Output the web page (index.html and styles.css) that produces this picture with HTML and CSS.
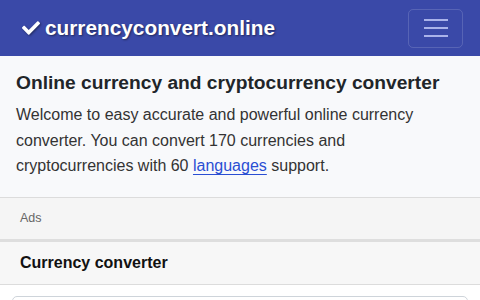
FILE: index.html
```html
<!DOCTYPE html>
<html lang="en">
<head>
<meta charset="utf-8">
<link rel="stylesheet" href="styles.css">
</head>
<body>
<nav class="navbar">
  <a class="brand" href="#">
    <svg class="check" viewBox="0 0 512 512" width="18" height="18"><path fill="#fff" d="M173.9 439.4L7.5 273c-10-10-10-26.2 0-36.2l36.2-36.2c10-10 26.2-10 36.2 0L192 312.7 432.1 72.6c10-10 26.2-10 36.2 0l36.2 36.2c10 10 10 26.2 0 36.2L210.1 439.4c-10 10-26.2 10-36.2 0z"/></svg>
    <span>currencyconvert.online</span>
  </a>
  <button class="toggler" type="button" aria-label="menu">
    <span class="bar"></span><span class="bar"></span><span class="bar"></span>
  </button>
</nav>
<section class="intro">
  <h1>Online currency and cryptocurrency converter</h1>
  <p>Welcome to easy accurate and powerful online currency converter. You can convert 170 currencies and cryptocurrencies with 60 <a href="#">languages</a> support.</p>
</section>
<div class="ads">Ads</div>
<div class="card">
  <div class="card-header">Currency converter</div>
  <div class="card-body">
    <div class="input"></div>
  </div>
</div>
</body>
</html>
```
FILE: styles.css
```css
* { box-sizing: border-box; }
html, body { margin: 0; padding: 0; }
body {
  font-family: "Liberation Sans", Arial, sans-serif;
  color: #212529;
  background: #fff;
  width: 480px;
  height: 300px;
  overflow: hidden;
}
.navbar {
  height: 56px;
  background: #3a49a8;
  display: flex;
  align-items: center;
  justify-content: space-between;
  padding: 0 17px 0 22px;
}
.brand {
  display: flex;
  align-items: center;
  gap: 5px;
  color: #fff;
  text-decoration: none;
  font-weight: bold;
  font-size: 20.8px;
  text-shadow: 1px 1px 2px rgba(0,0,0,0.45);
}
.check { filter: drop-shadow(1px 1px 1px rgba(0,0,0,0.45)); }
.toggler {
  width: 55px;
  height: 39px;
  border: 1px solid rgba(255,255,255,0.15);
  border-radius: 5px;
  background: transparent;
  display: flex;
  flex-direction: column;
  align-items: center;
  justify-content: center;
  gap: 6px;
  padding: 0;
}
.bar {
  display: block;
  width: 24px;
  height: 2px;
  background: #aab3ea;
}
.intro {
  background: #f8f9fb;
  padding: 14px 16px 14px;
  border-bottom: 1px solid #dcdcdc;
  height: 142px;
}
.intro h1 {
  margin: 0 0 6px;
  font-size: 19.2px;
  font-weight: bold;
  line-height: 26px;
  color: #212529;
}
.intro p {
  margin: 0;
  font-size: 16px;
  line-height: 25.5px;
  color: #333;
}
.intro a { color: #2a4ed3; text-decoration: underline; text-underline-offset: 3px; }
.ads {
  background: #f5f5f5;
  height: 44px;
  padding: 13px 20px 0;
  font-size: 12.5px;
  color: #666;
  border-bottom: 3px solid #dedede;
}
.card-header {
  background: #f7f7f7;
  height: 43px;
  padding: 0 20px 1px;
  display: flex;
  align-items: center;
  font-weight: bold;
  font-size: 16px;
  color: #111;
  border-bottom: 1px solid #dcdcdc;
}
.card-body { padding: 11px 12px; }
.input {
  height: 40px;
  border: 1px solid #ced4da;
  border-radius: 5px;
}
```
